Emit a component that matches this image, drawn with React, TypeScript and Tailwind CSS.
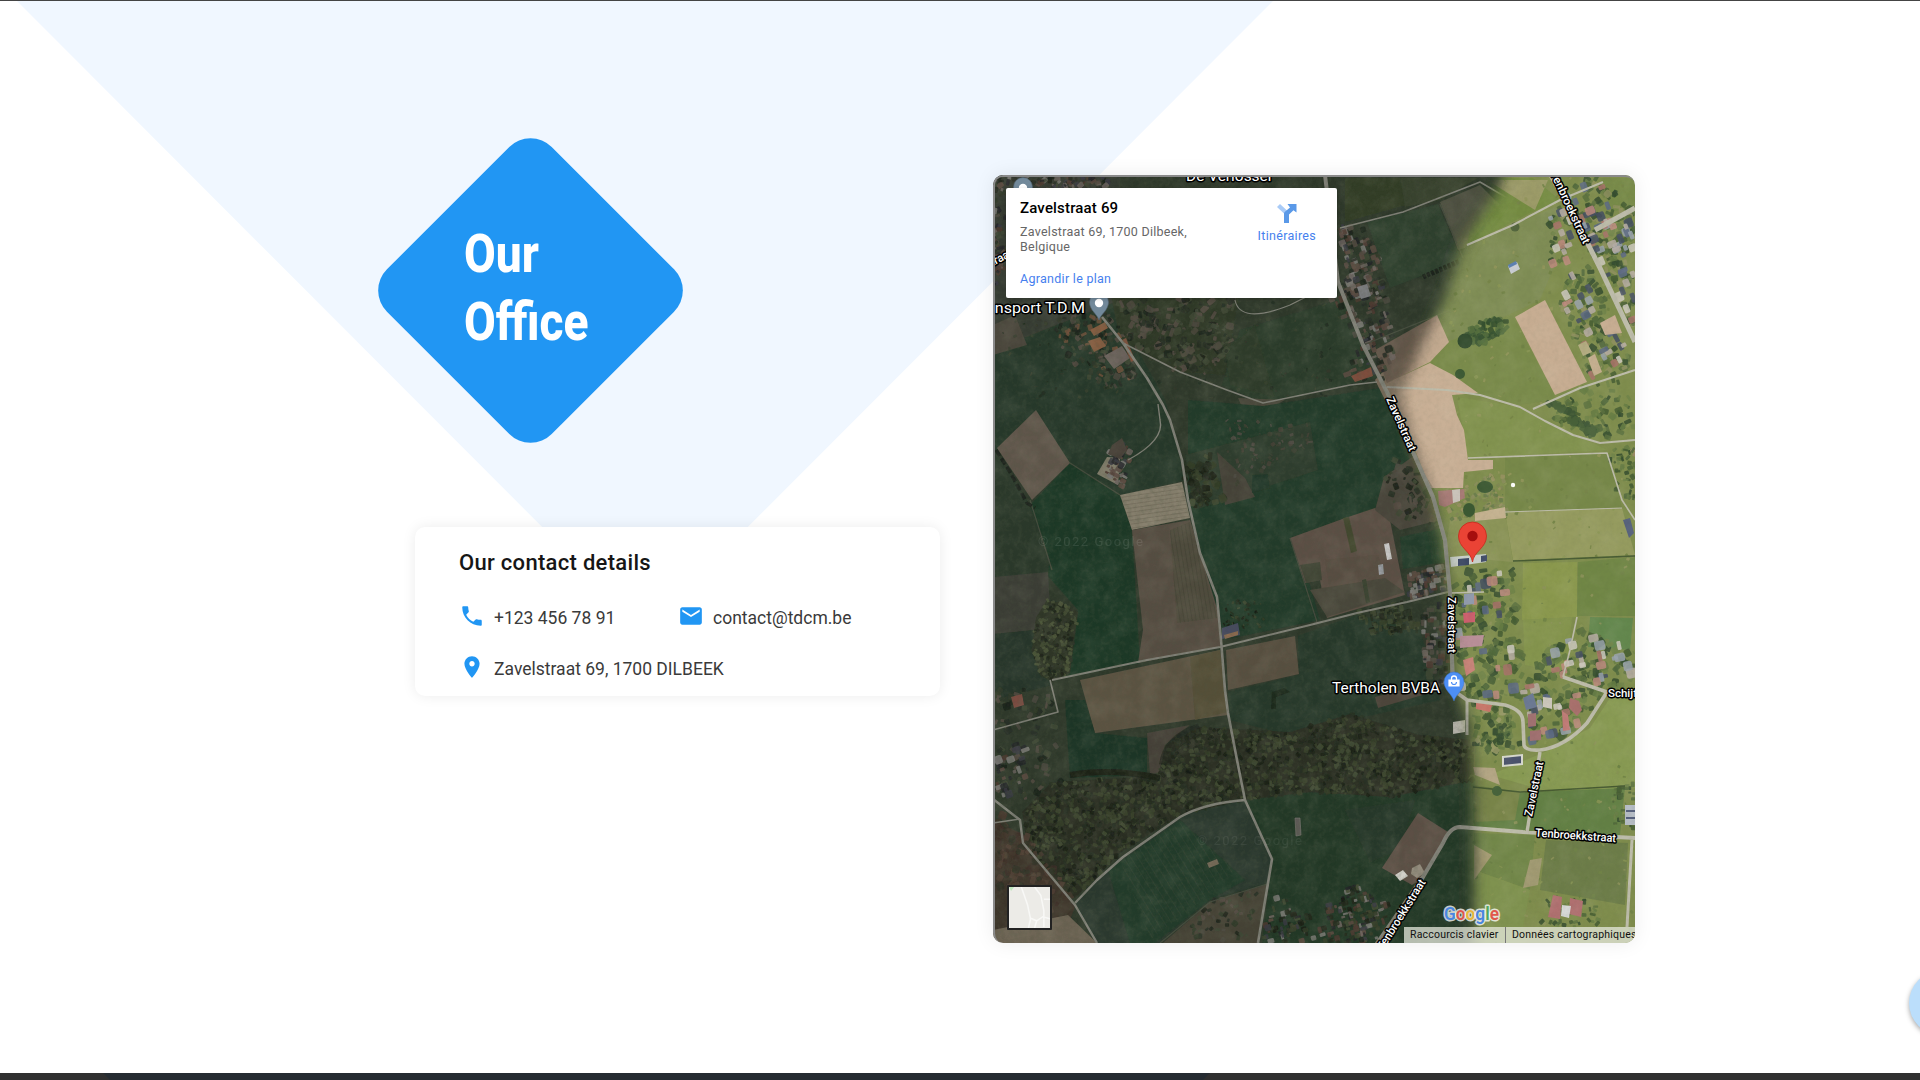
import React from "react";

type Pt = [number, number];
type Road = { d: string; w: number };
type Field = { p: string; c: string };
type Speck = { x: number; y: number; w: number; h: number; a: number; c: string };

function random(seed: number) {
  let s = seed;
  return () => {
    s = (s * 1664525 + 1013904223) % 4294967296;
    return s / 4294967296;
  };
}

function inside(x: number, y: number, poly: Pt[]) {
  let hit = false;
  for (let i = 0, j = poly.length - 1; i < poly.length; j = i++) {
    const [xi, yi] = poly[i];
    const [xj, yj] = poly[j];
    if (yi > y !== yj > y && x < ((xj - xi) * (y - yi)) / (yj - yi) + xi) hit = !hit;
  }
  return hit;
}

function scatter(seed: number, n: number, poly: Pt[], colors: string[], min: number, max: number, angle?: number): Speck[] {
  const r = random(seed);
  const xs = poly.map((p) => p[0]);
  const ys = poly.map((p) => p[1]);
  const x0 = Math.min(...xs);
  const y0 = Math.min(...ys);
  const w = Math.max(...xs) - x0;
  const h = Math.max(...ys) - y0;
  const out: Speck[] = [];
  for (let i = 0; i < n * 4 && out.length < n; i++) {
    const x = x0 + r() * w;
    const y = y0 + r() * h;
    const sw = min + r() * (max - min);
    const sh = min + r() * (max - min);
    const c = colors[Math.floor(r() * colors.length)];
    const a = angle === undefined ? r() * 180 : angle;
    if (inside(x, y, poly)) out.push({ x, y, w: sw, h: sh, a, c });
  }
  return out;
}

const DARK_TREES = ["#191f16", "#20281b", "#3a422d", "#424b33", "#282f22", "#333c28"];
const DARK_MIX = ["#1c231b", "#2f3929", "#4a463d", "#3e4835", "#272d24", "#544a42"];
const DARK_HOUSES = ["#5a4940", "#6b635e", "#222528", "#7a7976", "#4b372f", "#383a42"];
const LIT_TREES = ["#445c33", "#4e6639", "#344c2f", "#5a7040", "#667d44", "#70844a"];
const LIT_HOUSES = ["#a8726a", "#b9aea6", "#5c6884", "#cfcabf", "#454f63", "#bd8a7e", "#9aa3ad"];

const FOREST: Pt[] = [[1052, 782], [1158, 776], [1166, 745], [1200, 727], [1290, 732], [1350, 714], [1420, 735], [1474, 740], [1474, 780], [1390, 797], [1310, 792], [1245, 800], [1180, 815], [1120, 853], [1075, 898], [1028, 850], [1022, 812]];
const GROVE: Pt[] = [[1047, 600], [1062, 603], [1078, 612], [1070, 673], [1052, 682], [1040, 675], [1032, 650], [1036, 618]];
const NORTH_WOOD: Pt[] = [[1115, 298], [1235, 298], [1235, 330], [1218, 372], [1175, 372], [1120, 335]];
const TOP_STRIP: Pt[] = [[993, 175], [1110, 175], [1110, 190], [1006, 190], [1006, 270], [993, 290]];
const NORTH_VILLAGE: Pt[] = [[1548, 220], [1580, 178], [1600, 178], [1633, 210], [1634, 330], [1598, 262], [1588, 250], [1575, 225], [1565, 270], [1548, 262]];
const EAST_VILLAGE: Pt[] = [[1558, 278], [1592, 266], [1625, 345], [1633, 368], [1610, 375], [1592, 378], [1562, 310]];
const CENTRE_VILLAGE: Pt[] = [[1454, 572], [1515, 567], [1525, 700], [1465, 700], [1458, 680]];
const SOUTH_VILLAGE: Pt[] = [[1528, 665], [1580, 630], [1633, 650], [1633, 685], [1605, 690], [1585, 720], [1560, 740], [1530, 742]];

const darkSpecks: Speck[] = [
  ...scatter(11, 1700, FOREST, DARK_TREES, 2, 6),
  ...scatter(12, 210, GROVE, ["#454f36", "#4d573b", "#30372a", "#1f261b"], 2, 5),
  ...scatter(13, 210, NORTH_WOOD, DARK_MIX, 2, 9),
  ...scatter(14, 160, TOP_STRIP, [...DARK_MIX, ...DARK_HOUSES], 2, 7),
  ...scatter(15, 150, [[1052, 318], [1112, 312], [1140, 372], [1110, 392], [1065, 360]], [...DARK_MIX, "#70513b"], 2, 7),
  ...scatter(16, 60, [[1182, 465], [1212, 455], [1224, 500], [1198, 510], [1189, 500]], DARK_TREES, 3, 9),
  ...scatter(17, 90, [[995, 690], [1052, 690], [1060, 730], [1065, 780], [1030, 800], [995, 790]], DARK_MIX, 2, 8),
  ...scatter(37, 26, [[995, 745], [1025, 740], [1030, 790], [995, 800]], DARK_HOUSES, 3, 9, -20),
  ...scatter(18, 120, [[995, 800], [1025, 830], [1072, 895], [1050, 915], [995, 890]], ["#42352c", "#3b2f28", "#2f3226", "#503f34"], 3, 9),
  ...scatter(19, 150, [[1330, 300], [1352, 270], [1392, 300], [1395, 350], [1385, 380], [1345, 375], [1362, 345]], [...DARK_MIX, ...DARK_HOUSES], 2, 8, -20),
  ...scatter(20, 110, [[1338, 225], [1365, 225], [1385, 265], [1385, 300], [1350, 300]], [...DARK_MIX, ...DARK_HOUSES], 2, 8, -20),
  ...scatter(21, 70, [[1395, 460], [1418, 465], [1436, 510], [1440, 525], [1402, 520], [1385, 480]], DARK_MIX, 2, 8),
  ...scatter(22, 80, [[1407, 575], [1446, 565], [1448, 590], [1410, 600]], DARK_HOUSES, 2, 7, -10),
  ...scatter(23, 110, [[1357, 612], [1405, 602], [1420, 630], [1375, 635]], DARK_TREES, 2, 7, -10),
  ...scatter(24, 90, [[1422, 610], [1450, 600], [1454, 690], [1425, 680]], [...DARK_HOUSES, ...DARK_MIX], 2, 8, 0),
  ...scatter(25, 180, [[1262, 935], [1275, 895], [1320, 920], [1345, 880], [1390, 905], [1375, 943], [1262, 943]], [...DARK_TREES, ...DARK_HOUSES], 2, 7, -15),
  ...scatter(26, 50, [[1210, 900], [1260, 890], [1245, 940], [1180, 942]], DARK_MIX, 2, 6),
  ...scatter(27, 50, [[1105, 455], [1128, 435], [1134, 470], [1122, 490], [1108, 478]], DARK_HOUSES, 2, 7, 30),
  ...scatter(28, 50, [[1220, 605], [1262, 595], [1265, 635], [1225, 640]], DARK_TREES, 1, 4),
  ...scatter(29, 160, [[1000, 300], [1350, 300], [1350, 400], [1000, 400]], ["#202c20", "#313a2b", "#38412f"], 1, 4),
  ...scatter(31, 70, [[1225, 420], [1310, 425], [1312, 445], [1228, 490]], ["#474238", "#3c4133", "#504c45"], 1, 5),
];

const litSpecks: Speck[] = [
  ...scatter(49, 200, [[1440, 178], [1635, 178], [1635, 560], [1460, 560]], ["#758447", "#8b9656", "#6e8043", "#92955c"], 1, 4),
  ...scatter(50, 200, [[1470, 560], [1635, 560], [1635, 943], [1470, 943]], ["#708346", "#879453", "#677d42", "#8d935c"], 1, 4),
  ...scatter(41, 170, NORTH_VILLAGE, [...LIT_TREES, "#8f9060"], 3, 8),
  ...scatter(61, 66, NORTH_VILLAGE, LIT_HOUSES, 4, 10, -22),
  ...scatter(42, 120, EAST_VILLAGE, [...LIT_TREES, "#8f9060"], 3, 8),
  ...scatter(62, 26, EAST_VILLAGE, LIT_HOUSES, 4, 10, -28),
  ...scatter(43, 60, [[1458, 347], [1475, 325], [1508, 314], [1506, 330], [1478, 345]], ["#3f5a37", "#35502f", "#56703f"], 3, 8),
  ...scatter(44, 70, [[1590, 380], [1625, 378], [1635, 430], [1605, 440], [1545, 418]], LIT_TREES, 2, 8),
  ...scatter(54, 40, [[1543, 402], [1552, 400], [1600, 432], [1590, 436]], ["#3d5635", "#48613a"], 4, 8),
  ...scatter(45, 170, CENTRE_VILLAGE, LIT_TREES, 3, 9),
  ...scatter(65, 26, CENTRE_VILLAGE, LIT_HOUSES, 4, 11, -6),
  ...scatter(46, 120, [[1440, 490], [1505, 470], [1507, 515], [1450, 520]], ["#8a8d5d", "#999263", "#66794a", "#7b8450"], 1, 5),
  ...scatter(47, 170, SOUTH_VILLAGE, LIT_TREES, 3, 9),
  ...scatter(67, 44, SOUTH_VILLAGE, LIT_HOUSES, 4, 11, -12),
  ...scatter(48, 90, [[1474, 700], [1515, 710], [1520, 745], [1490, 755], [1475, 750]], [...LIT_TREES, "#9a9b6a"], 2, 8),
  ...scatter(51, 40, [[1540, 898], [1598, 895], [1598, 926], [1540, 926]], LIT_TREES, 2, 6),
  ...scatter(52, 40, [[1612, 790], [1635, 780], [1635, 830], [1614, 828]], LIT_TREES, 2, 6, 0),
  ...scatter(53, 50, [[1608, 450], [1635, 445], [1635, 500], [1618, 500]], [...LIT_TREES, "#a08a6a"], 2, 6),
];

const darkFields: Field[] = [
  { p: "993,300 1110,300 1165,400 1185,480 1120,495 993,450", c: "#27392a" },
  { p: "993,175 1120,175 1120,300 993,350", c: "#363a30" },
  { p: "993,325 1015,315 1027,345 993,355", c: "#48453b" },
  { p: "1110,290 1240,290 1225,375 1180,372 1120,340", c: "#2f3727" },
  { p: "1240,330 1345,298 1377,378 1263,403 1222,385", c: "#2a3b2a" },
  { p: "1225,350 1255,325 1275,398 1230,385", c: "#2d3b29" },
  { p: "1238,398 1285,400 1255,416 1245,414", c: "#4a473a" },
  { p: "1345,178 1400,178 1406,205 1345,222", c: "#323d28" },
  { p: "1400,178 1478,178 1440,200 1405,207", c: "#37422d" },
  { p: "1367,222 1438,204 1462,260 1390,288", c: "#2e3f2f" },
  { p: "1440,202 1480,185 1500,205 1465,248 1458,250", c: "#4d503f" },
  { p: "1188,400 1263,406 1380,388 1410,460 1380,510 1290,540 1310,585 1320,620 1223,640 1200,553 1188,500", c: "#223a29" },
  { p: "1185,455 1310,422 1318,470 1195,510", c: "#2e3c2d" },
  { p: "1217,452 1245,478 1255,497 1225,505", c: "#454338" },
  { p: "1252,475 1268,474 1270,488 1252,493", c: "#243929" },
  { p: "1070,463 1120,495 1132,530 1140,663 1055,680 1078,610 1047,575 1030,505", c: "#1f3826" },
  { p: "993,450 1030,505 1050,560 1048,573 993,578", c: "#29382b" },
  { p: "993,577 1048,572 1050,605 1035,630 993,634", c: "#3a3d34" },
  { p: "993,634 1035,630 1052,685 993,700", c: "#273529" },
  { p: "1036,410 1070,463 1032,500 997,448", c: "#60574b" },
  { p: "1107,457 1120,458 1118,485 1097,474", c: "#807b6b" },
  { p: "1120,495 1182,482 1190,518 1132,530", c: "#857e6c" },
  { p: "1132,530 1190,520 1220,618 1220,647 1138,663 1143,630", c: "#574e42" },
  { p: "1170,530 1190,522 1218,618 1177,623", c: "#504b3d" },
  { p: "1080,680 1220,650 1228,715 1095,733", c: "#5c5343" },
  { p: "1190,657 1220,650 1228,712 1195,720", c: "#545039" },
  { p: "1226,650 1295,636 1299,674 1228,690", c: "#594f40" },
  { p: "1298,636 1357,615 1420,630 1440,700 1350,720 1290,735 1230,720 1228,692 1299,675", c: "#27382a" },
  { p: "1065,700 1085,700 1095,733 1147,738 1147,775 1070,778", c: "#1f3626" },
  { p: "1147,733 1190,725 1165,745 1160,772 1150,775", c: "#454137" },
  { p: "1290,538 1345,518 1375,508 1390,520 1405,595 1327,618 1320,580 1305,583", c: "#5b4f44" },
  { p: "1325,560 1378,555 1385,578 1330,590", c: "#594e42" },
  { p: "1310,590 1385,578 1405,592 1327,617", c: "#4a473a" },
  { p: "1300,565 1320,562 1322,580 1306,583", c: "#414436" },
  { p: "1343,518 1349,517 1357,551 1351,553", c: "#42472f" },
  { p: "1362,580 1366,579 1370,602 1366,603", c: "#37402f" },
  { p: "1384,477 1415,455 1440,520 1400,530 1375,510", c: "#49453a" },
  { p: "1400,537 1443,528 1445,562 1403,569", c: "#233b29" },
  { p: "1375,697 1440,680 1440,690 1378,708", c: "#4e453b" },
  { p: "1415,460 1375,380 1437,315 1455,375 1480,400 1470,490 1435,490", c: "#746656" },
  { p: "1437,315 1449,342 1430,362 1387,383 1375,350", c: "#625548" },
  { p: "1245,800 1310,790 1390,797 1475,780 1475,943 1262,943 1272,860", c: "#243727" },
  { p: "1345,810 1415,800 1400,850 1370,862", c: "#28382a" },
  { p: "1420,740 1475,740 1475,778 1430,785", c: "#3f3d31" },
  { p: "1418,813 1448,832 1423,878 1412,885 1382,868", c: "#5c4f45" },
  { p: "1245,800 1272,859 1268,883 1210,900 1160,943 1097,943 1075,904 1097,880 1123,857 1180,817 1213,805", c: "#29392d" },
  { p: "1108,870 1180,820 1245,880 1210,900 1155,943 1130,943", c: "#233a2a" },
  { p: "1268,884 1210,902 1163,943 1258,943", c: "#454236" },
  { p: "993,820 1025,835 1075,907 1070,920 993,930", c: "#3d342c" },
  { p: "993,930 1068,915 1097,943 993,943", c: "#6c6352" },
];

const litFields: Field[] = [
  { p: "1480,178 1533,178 1560,200 1530,213 1467,245", c: "#748c42" },
  { p: "1487,180 1548,180 1535,210", c: "#9c9b68" },
  { p: "1600,178 1635,178 1635,205 1612,212", c: "#788b48" },
  { p: "1467,245 1560,205 1555,265 1540,300 1445,345 1430,310", c: "#7f8d54" },
  { p: "1448,342 1512,315 1555,395 1553,400 1520,405 1480,395 1430,362", c: "#7a8b4b" },
  { p: "1457,397 1520,407 1607,450 1468,458", c: "#82934f" },
  { p: "1505,457 1610,453 1622,508 1505,512", c: "#778849" },
  { p: "1505,512 1622,508 1635,555 1513,560", c: "#959b5f" },
  { p: "1450,520 1505,512 1513,562 1445,556", c: "#8b9459" },
  { p: "1523,563 1577,562 1577,617 1522,620", c: "#8a984d" },
  { p: "1578,562 1635,557 1635,616 1577,616", c: "#708645" },
  { p: "1590,617 1633,618 1630,650 1588,647", c: "#64874e" },
  { p: "1523,620 1572,617 1568,675 1525,665", c: "#84944e" },
  { p: "1545,752 1590,728 1612,695 1635,700 1635,788 1560,795 1490,775", c: "#889a52" },
  { p: "1472,785 1520,792 1625,788 1620,835 1474,828", c: "#648044" },
  { p: "1472,785 1520,792 1515,820 1474,822", c: "#79854a" },
  { p: "1474,833 1535,835 1530,890 1474,870", c: "#728749" },
  { p: "1546,840 1628,843 1625,905 1540,890", c: "#6d7d49" },
  { p: "1474,870 1530,890 1520,943 1474,943", c: "#7f924f" },
];

const sandFields: Field[] = [
  { p: "1474,845 1492,855 1474,880", c: "#a69c73" },
  { p: "1530,860 1542,858 1538,885 1523,888", c: "#a19a72" },
  { p: "1473,767 1495,768 1500,785 1475,775", c: "#b3a583" },
  { p: "1375,350 1437,315 1449,342 1430,362 1387,383", c: "#c3aa90" },
  { p: "1387,383 1430,363 1453,375 1478,393 1452,395 1457,415 1464,430 1468,460 1493,460 1493,469 1464,472 1463,488 1430,488 1410,437", c: "#c8af95" },
  { p: "1545,300 1587,382 1555,395 1515,317", c: "#c7ad92" },
  { p: "1578,345 1586,341 1592,352 1583,356", c: "#b3ab80" },
  { p: "1588,358 1595,354 1602,372 1594,376", c: "#c4ae8e" },
  { p: "1475,513 1505,507 1506,518 1475,521", c: "#c4b18f" },
  { p: "1600,323 1615,315 1622,333 1605,335", c: "#c7ad92" },
];

const roads: Road[] = [
  { d: "M1102 317L1123 343L1147 378L1163 405L1170 420L1182 460L1188 500L1200 553L1217 597L1221 640L1225 690L1228 713L1237 760L1245 800L1272 859L1258 943", w: 2.6 },
  { d: "M1123 343L1180 372L1227 390L1263 403L1350 385L1377 382", w: 1.6 },
  { d: "M1325 175L1338 282L1363 345L1387 392L1403 425L1413 452L1433 497L1445 540L1450 593L1453 690", w: 4 },
  { d: "M1052 680L1147 660L1220 647L1310 625L1357 613L1407 602L1448 592", w: 2 },
  { d: "M1075 903L1097 880L1123 857L1180 817Q1205 803 1245 800", w: 2.4 },
  { d: "M993 799L1020 820L1023 843L1075 905L1097 943", w: 2.4 },
  { d: "M993 730L1058 712L1050 680", w: 1.6 },
  { d: "M1340 228L1403 212L1480 182L1533 213", w: 1.6 },
  { d: "M1128 460Q1165 440 1160 420L1158 404", w: 1.4 },
  { d: "M993 823L1020 819", w: 1.4 },
  { d: "M1235 300Q1240 325 1290 305L1330 285", w: 1.2 },
];

const litRoads: Road[] = [
  { d: "M1551 175L1587 242L1600 268L1635 342", w: 5 },
  { d: "M1467 245L1513 225L1560 200L1603 182", w: 2 },
  { d: "M1595 230L1635 208", w: 5 },
  { d: "M1387 387L1447 390L1480 395L1520 407L1545 421L1573 435L1600 443L1635 440", w: 2 },
  { d: "M1533 409L1580 388L1635 370", w: 2 },
  { d: "M1468 458L1607 453L1622 500L1635 520", w: 1.6 },
  { d: "M1505 512L1622 508", w: 1 },
  { d: "M1376 945L1423 877L1443 843Q1450 827 1460 827L1523 832L1635 838", w: 4 },
  { d: "M1632 840L1627 927", w: 3 },
  { d: "M1527 832L1540 752", w: 3.4 },
  { d: "M1453 690L1467 700L1505 705Q1523 710 1523 722L1524 745Q1525 751 1540 750Q1565 747 1587 723L1607 692L1563 677", w: 3.6 },
  { d: "M1450 593L1484 592", w: 1.6 },
  { d: "M1577 617L1570 650L1563 677", w: 1.6 },
  { d: "M1467 700L1467 735", w: 3 },
];

function Specks({ items }: { items: Speck[] }) {
  return (
    <>
      {items.map((s, i) => (
        <rect key={i} x={s.x - s.w / 2} y={s.y - s.h / 2} width={s.w} height={s.h} rx={Math.min(s.w, s.h) / 4} fill={s.c} transform={`rotate(${s.a} ${s.x} ${s.y})`} opacity={0.85} />
      ))}
    </>
  );
}

function Fields({ items }: { items: Field[] }) {
  return (
    <>
      {items.map((f, i) => (
        <polygon key={i} points={f.p} fill={f.c} />
      ))}
    </>
  );
}

function Roads({ items, color }: { items: Road[]; color: string }) {
  return (
    <>
      {items.map((r, i) => (
        <path key={i} d={r.d} fill="none" stroke={color} strokeWidth={r.w} strokeLinejoin="round" />
      ))}
    </>
  );
}

type LabelProps = { x: number; y: number; size: number; len?: number; rotate?: number; weight?: number; anchor?: "start" | "end"; children: string };

function Label({ x, y, size, len, rotate = 0, weight = 500, anchor = "start", children }: LabelProps) {
  return (
    <text
      x={x}
      y={y}
      fontSize={size}
      fontWeight={weight}
      textLength={len}
      lengthAdjust="spacingAndGlyphs"
      textAnchor={anchor}
      transform={`rotate(${rotate} ${x} ${y})`}
      fill="#fff"
      stroke="#000"
      strokeWidth={3}
      strokeLinejoin="round"
      paintOrder="stroke"
    >
      {children}
    </text>
  );
}

function GreyPin({ x, y }: { x: number; y: number }) {
  return (
    <g transform={`translate(${x} ${y})`}>
      <path d="M0 17C-2 11-9.500 7-9.500-1A9.500 9.500 0 0 1 9.500-1C9.500 7 2 11 0 17Z" fill="#72899a" stroke="#536573" strokeWidth=".6" />
      <circle cx="0" cy="0" r="4.200" fill="#fff" />
    </g>
  );
}

function SatelliteMap() {
  return (
    <svg className="block h-full w-full font-['Roboto',sans-serif]" viewBox="993 175 642 768" preserveAspectRatio="none">
      <defs>
        <filter id="shade" x="-10%" y="-10%" width="120%" height="120%">
          <feGaussianBlur stdDeviation="7" />
        </filter>
        <filter id="soften">
          <feGaussianBlur stdDeviation=".5" />
        </filter>
        <filter id="grain" x="0" y="0" width="100%" height="100%">
          <feTurbulence type="fractalNoise" baseFrequency=".22" numOctaves="3" seed="4" />
          <feColorMatrix values="0 0 0 0 .08  0 0 0 0 .1  0 0 0 0 .06  1.3 0 0 0 -.5" />
        </filter>
        <filter id="glow" x="0" y="0" width="100%" height="100%">
          <feTurbulence type="fractalNoise" baseFrequency=".05" numOctaves="5" seed="9" />
          <feColorMatrix values="0 0 0 0 .8  0 0 0 0 .76  0 0 0 0 .6  1.3 0 0 0 -.5" />
        </filter>
        <mask id="cloud" maskUnits="userSpaceOnUse" x="993" y="175" width="642" height="768">
          <path filter="url(#shade)" fill="#fff" d="M940 120H1525L1495 195L1462 245L1443 300L1422 345L1400 395L1412 440L1430 490L1442 540L1449 600L1453 680L1470 725L1474 800V1000H940Z" />
        </mask>
        <pattern id="furrows" width="6" height="6" patternUnits="userSpaceOnUse" patternTransform="rotate(-32)">
          <rect width="1" height="6" fill="#3a4b3a" />
        </pattern>
        <pattern id="rows" width="60" height="4" patternUnits="userSpaceOnUse" patternTransform="rotate(-8)">
          <rect width="60" height="1" fill="#6e6757" />
        </pattern>
        <pattern id="columns" width="4" height="60" patternUnits="userSpaceOnUse" patternTransform="rotate(-9)">
          <rect width="1" height="60" fill="#3c3d30" />
        </pattern>
      </defs>

      <g filter="url(#soften)">
        <rect x="993" y="175" width="642" height="768" fill="#7f8d4e" />
        <Fields items={litFields} />
        <Specks items={litSpecks} />
        <Fields items={sandFields} />
        <path d="M1513 561L1635 556M1473 787L1520 792L1625 786" stroke="#465a32" strokeWidth="1.500" fill="none" />
        <path d="M1508 266l9-4 3 7-9 5z" fill="#c9cdd4" />
        <path d="M1508 265l8-4 1 3-8 4z" fill="#5d81b4" />
        <path d="M1450 557l36-3v8l-35 5z" fill="#c9cfc9" />
        <path d="M1458 559l11-1v7l-11 1zM1481 556l6-1v6l-6 1z" fill="#3d4a66" />
        <path d="M1438 491l26-2 1 9-20 9-6-2z" fill="#a77a75" />
        <path d="M1452 490l8-1v12l-7 2z" fill="#c9c2ba" />
        <path d="M1503 757l19-2v9l-19 2z" fill="#46506a" stroke="#d8d9cf" strokeWidth="2" />
        <path d="M1460 636l24-1-2 11-22 2z" fill="#b98f98" />
        <path d="M1463 613l12-1v10l-11 1z" fill="#cc5e6d" />
        <path d="M1464 594l10-1v11l-10 1z" fill="#8e98ac" />
        <path d="M1463 660l10-3 2 13-9 6z" fill="#c77e74" />
        <path d="M1523 698l10-5 4 14-11 3z" fill="#6b7893" />
        <path d="M1543 697l9 1v11l-9-2z" fill="#cbc6bb" />
        <path d="M1528 714l8-1v13l-8 1zM1530 731l11-1v10l-11 1z" fill="#a06f70" />
        <path d="M1570 698l9 3 3 9-5 6-8-8z" fill="#a86f6c" />
        <path d="M1562 711l6 4 2 15-7 1z" fill="#c07a76" />
        <path d="M1476 702l16 3-2 7-14-3z" fill="#c77468" />
        <path d="M1553 895l9 2-2 22-12-2zM1570 898l13 3-2 16-12-3z" fill="#b07070" />
        <path d="M1562 905l9 1-2 12-8-2z" fill="#d6d8d6" />
        <path d="M1625 805h10v20h-10z" fill="#b6bdc6" />
        <path d="M1626 811h9M1626 818h9" stroke="#54607c" strokeWidth="2" />
        <path d="M1623 520l7-2 4 15-5 5z" fill="#55607c" />
        <circle cx="1513" cy="485" r="2.200" fill="#fff" />
        <circle cx="1465" cy="341" r="7.500" fill="#334c2f" />
        <circle cx="1460" cy="374" r="5" fill="#3d5a34" />
        <ellipse cx="1485" cy="487" rx="8" ry="6" fill="#3a5833" />
        <ellipse cx="1469" cy="510" rx="6" ry="7" fill="#3a5833" />
        <circle cx="1497" cy="791" r="5" fill="#46633a" />
        <circle cx="1515" cy="227" r="4.500" fill="#53653c" />
        <Roads items={litRoads} color="#bdbcaa" />

        <g mask="url(#cloud)">
          <rect x="993" y="175" width="642" height="768" fill="#2d382b" />
          <Fields items={darkFields} />
          <polygon points="1120,860 1180,822 1235,870 1190,910 1150,940" fill="url(#furrows)" opacity=".35" />
          <polygon points="1120,495 1182,482 1190,518 1132,530" fill="url(#rows)" opacity=".6" />
          <polygon points="1170,530 1190,522 1218,618 1177,623" fill="url(#columns)" opacity=".5" />
          <polygon points={FOREST.map((p) => p.join(",")).join(" ")} fill="#2a2f24" />
          <polygon points={GROVE.map((p) => p.join(",")).join(" ")} fill="#2e3526" />
          <Specks items={darkSpecks} />
          <path d="M1090 330l15-8 3 6-14 8zM1088 341l12-4 6 9-12 6z" fill="#845c40" />
          <path d="M1104 356l18-10 8 12-16 11z" fill="#69605a" />
          <path d="M1122 340l4-2 9 22-4 2z" fill="#7b4f3b" />
          <path d="M1112 445l10-7 5 12-7 9-12-5z" fill="#464039" />
          <path d="M1222 628l16-5 2 12-18 4z" fill="#474c60" />
          <path d="M1224 635l14-4v4l-13 4z" fill="#8a6a50" />
          <path d="M1384 544l5-1 3 16-5 1z" fill="#c5c4c4" />
          <path d="M1378 565l5-1 1 10-5 1z" fill="#989ba0" />
          <path d="M1395 875l8-5 5 6-8 5z" fill="#d0cfc8" />
          <path d="M1412 868l8-4 5 9-8 5-6-4z" fill="#928b7b" />
          <path d="M1207 863l10-4 2 5-10 4z" fill="#746a59" />
          <path d="M1295 818h5l1 17-5 1z" fill="#5b5954" stroke="#7c7a73" strokeWidth=".6" />
          <path d="M1351 376l20-9 2 9-18 6z" fill="#7c4b3a" />
          <path d="M1011 697l11-3 2 11-10 3z" fill="#7a4c40" />
          <path d="M1453 722l12-2v12l-12 2z" fill="#b2afa8" />
          <path d="M1357 287l10-3 4 12-10 3z" fill="#75777a" />
          <path d="M1363 345L1463 305M1440 204L1463 258M1070 463L1120 495M1030 500L1052 570M1317 622L1290 538M1160 943L1210 902L1267 884" stroke="#454b3d" strokeWidth="1.200" fill="none" />
          <path d="M1423 277L1460 261" stroke="#1b231a" strokeWidth="5" strokeDasharray="3 1.500" />
          <path d="M996 450L1010 472L1027 503L1035 508" stroke="#1b231b" strokeWidth="3.500" strokeDasharray="7 3" fill="none" />
          <path d="M1070 775Q1110 768 1160 778" stroke="#1a2119" strokeWidth="6" fill="none" />
          <path d="M1165 765Q1168 740 1200 729" stroke="#1e231b" strokeWidth="12" fill="none" opacity=".6" />
          <path d="M1272 692l12-4 6 4-14 5v12h-5z" fill="#1c291e" />
          <Roads items={roads} color="#7f7f76" />
          <Roads items={litRoads} color="#7f7f76" />
        </g>
        <path d="M1413 452L1433 497L1445 540L1450 593L1453 690" fill="none" stroke="#85867b" strokeWidth="4" />
      </g>
      <g mask="url(#cloud)">
        <rect x="993" y="175" width="642" height="768" filter="url(#grain)" opacity=".32" />
      </g>
      <rect x="993" y="175" width="642" height="768" filter="url(#grain)" opacity=".1" />
      <rect x="993" y="175" width="642" height="768" filter="url(#glow)" opacity=".12" />

      <text x="1038" y="546" fontSize="13" letterSpacing="1.500" fill="#fff" opacity=".09">© 2022 Google</text>
      <text x="1197" y="845" fontSize="13" letterSpacing="1.500" fill="#fff" opacity=".06">© 2022 Google</text>

      <Label x={1186} y={180.5} size={15} len={87} weight={400}>De Verlosser</Label>
      <Label x={1085} y={312.5} size={15.500} len={113} anchor="end" weight={400}>Transport T.D.M</Label>
      <Label x={963} y={282} size={11.500} len={57} rotate={-28}>Zavelstraat</Label>
      <Label x={1386} y={399} size={11.500} len={58} rotate={66}>Zavelstraat</Label>
      <Label x={1448} y={597} size={11.500} len={56} rotate={90}>Zavelstraat</Label>
      <Label x={1532} y={817} size={11.500} len={56} rotate={-78}>Zavelstraat</Label>
      <Label x={1535} y={836.5} size={11.500} len={81} rotate={4}>Tenbroekkstraat</Label>
      <Label x={1383} y={951} size={11.500} len={81} rotate={-58}>Tenbroekkstraat</Label>
      <Label x={1550} y={173} size={11.500} len={79} rotate={65}>Tenbroekstraat</Label>
      <Label x={1608} y={697} size={11.500}>Schijfstraat</Label>
      <Label x={1332} y={693} size={15.500} len={108} weight={400}>Tertholen BVBA</Label>

      <GreyPin x={1023} y={188} />
      <GreyPin x={1099} y={303} />
      <g transform="translate(1454 682)">
        <path d="M0 19C-2 12-10 8-10 0A10 10 0 0 1 10 0C10 8 2 12 0 19Z" fill="#4d8ff5" stroke="#3d73c9" strokeWidth=".5" />
        <path d="M-5-2h10v6h-10z" fill="#fff" stroke="#fff" strokeWidth="1.200" />
        <path d="M-2.500-2v-1.500a2.500 2.500 0 0 1 5 0v1.500" fill="none" stroke="#fff" strokeWidth="1.300" />
        <path d="M-2.500 0a2.500 2.500 0 0 0 5 0" fill="none" stroke="#4d8ff5" strokeWidth="1.200" />
      </g>
      <g transform="translate(1472.500 536)">
        <path d="M0 26C-1.500 15-14 12-14 0A14 14 0 0 1 14 0C14 12 1.500 15 0 26Z" fill="#ea4335" stroke="#c5281c" strokeWidth=".8" />
        <circle r="5.200" fill="#a50e0e" />
      </g>

      <text x="1444" y="920" fontSize="18.500" fontWeight="600" textLength="55" lengthAdjust="spacingAndGlyphs" stroke="#fff" strokeOpacity=".75" strokeWidth="3" strokeLinejoin="round" paintOrder="stroke">
        <tspan fill="#4a86e0">G</tspan>
        <tspan fill="#e0584c">o</tspan>
        <tspan fill="#e8b73a">o</tspan>
        <tspan fill="#4a86e0">g</tspan>
        <tspan fill="#4fa75e">l</tspan>
        <tspan fill="#e0584c">e</tspan>
      </text>
    </svg>
  );
}

function DirectionsIcon() {
  return (
    <svg className="h-5 w-5 shrink-0" viewBox="0 0 20 20">
      <path d="M0 4L3 1l7 6.500V13L7 10.500z" fill="#a9cbf7" />
      <path d="M7 20V10.800q0-1 .7-1.700L13 4.500 10.500 1H19.500V9.500L16.500 7.200 12 11.500V20z" fill="#5a99e8" />
    </svg>
  );
}

function InfoCard() {
  return (
    <div className="absolute left-[13px] top-[13px] flex h-[110px] w-[331px] justify-between rounded-[2px] bg-white pl-[14px] pr-[21px] shadow-[0_1px_4px_-1px_rgba(0,0,0,0.3)]">
      <div className="pt-[11px]">
        <div className="text-[15px] font-medium leading-[18px] tracking-[0.17px] text-black">Zavelstraat 69</div>
        <div className="mt-[7px] text-[12.500px] leading-[15px] tracking-[0.26px] text-[#666]">
          Zavelstraat 69, 1700 Dilbeek,
          <br />
          Belgique
        </div>
        <div className="mt-[17px] text-[12.500px] leading-[15px] tracking-[0.28px] text-[#4580ee]">Agrandir le plan</div>
      </div>
      <div className="flex flex-col items-center pt-[15px] text-[12.500px] tracking-[0.3px] text-[#4580ee]">
        <DirectionsIcon />
        <span className="mt-[5px] leading-[16px]">Itinéraires</span>
      </div>
    </div>
  );
}

function LayerThumb() {
  return (
    <div className="absolute left-[14px] top-[710px] h-[45px] w-[45px] rounded-[1px] border-2 border-[#222] bg-[#ecebe7]">
      <svg className="block h-full w-full" viewBox="0 0 40 40" fill="none" stroke="#f8f8f6" strokeWidth="1.500">
        <path d="M12 0l6 17 3 14-2 9M25 0l6 8 3 15v16M20 30l7 3 6-4 7 2M34 12h6M27 33l-2 7" />
        <path d="M0 0h5L2 4z" fill="#bfe6bd" stroke="none" />
      </svg>
    </div>
  );
}

function MapPanel() {
  return (
    <div className="relative mt-[174px] h-[768px] w-[642px] shrink-0 overflow-hidden rounded-[10px] shadow-[0_0_20px_rgba(0,0,0,0.08)]">
      <SatelliteMap />
      <InfoCard />
      <LayerThumb />
      <div className="absolute bottom-0 left-[411px] flex h-[16px] w-[231px] overflow-hidden whitespace-nowrap bg-[#e6e8dc]/75 text-[10.500px] leading-[15px] tracking-[0.2px] text-[#111]">
        <div className="w-[102px] shrink-0 border-r border-[#777] pl-[6px]">Raccourcis clavier</div>
        <div className="shrink-0 pl-[6px]">Données cartographiques</div>
      </div>
      <div className="pointer-events-none absolute inset-0 rounded-[10px] border-l-2 border-t-2 border-[#8a8a8a]" />
    </div>
  );
}

function Detail({ icon, children }: { icon: string; children: string }) {
  return (
    <div className="flex items-center gap-[9px] whitespace-nowrap">
      <svg className="relative -top-[2px] h-[26px] w-[26px] shrink-0 fill-[#2196f3]" viewBox="0 0 24 24">
        <path d={icon} />
      </svg>
      <span>{children}</span>
    </div>
  );
}

const PHONE = "M6.620 10.790c1.440 2.830 3.760 5.140 6.590 6.590l2.200-2.200c.27-.27.67-.36 1.020-.24 1.120.37 2.330.57 3.570.57.55 0 1 .45 1 1V20c0 .55-.45 1-1 1-9.390 0-17-7.610-17-17 0-.55.45-1 1-1h3.500c.55 0 1 .45 1 1 0 1.250.2 2.450.57 3.570.11.35.03.74-.25 1.020l-2.200 2.200z";
const MAIL = "M20 4H4c-1.100 0-1.990.9-1.990 2L2 18c0 1.100.9 2 2 2h16c1.100 0 2-.9 2-2V6c0-1.100-.9-2-2-2zm0 4l-8 5-8-5V6l8 5 8-5v2z";
const PLACE = "M12 2C8.130 2 5 5.130 5 9c0 5.250 7 13 7 13s7-7.750 7-13c0-3.870-3.130-7-7-7zm0 9.500c-1.380 0-2.500-1.120-2.500-2.500s1.120-2.500 2.500-2.500 2.500 1.120 2.500 2.500-1.120 2.500-2.500 2.500z";

function ContactCard() {
  return (
    <section className="relative ml-[37px] mt-[84px] h-[169px] w-[525px] rounded-[10px] bg-white pl-[44px] pt-[21px] shadow-[0_0_14px_rgba(0,0,0,0.08)]">
      <h2 className="text-[22px] font-medium leading-[30px] tracking-[0.3px] text-[#161616]">Our contact details</h2>
      <div className="mt-[27px] flex flex-col gap-[25px] text-[17.500px] leading-[26px] text-[#3a3a3a]">
        <div className="grid grid-cols-[219px_1fr]">
          <Detail icon={PHONE}>+123 456 78 91</Detail>
          <Detail icon={MAIL}>contact@tdcm.be</Detail>
        </div>
        <Detail icon={PLACE}>Zavelstraat 69, 1700 DILBEEK</Detail>
      </div>
    </section>
  );
}

function Title() {
  return (
    <div className="relative mt-[137px] flex h-[305px] w-[305px] items-center justify-center">
      <div className="absolute left-[36px] top-[36px] h-[233px] w-[233px] rotate-45 rounded-[30px] bg-[#2196f3]" />
      <h1 className="relative -top-[3px] w-[134px] text-[53px] font-extrabold leading-[68px] text-white">
        <span className="inline-block origin-left scale-x-[0.87] whitespace-nowrap">
          Our
          <br />
          Office
        </span>
      </h1>
    </div>
  );
}

export default function App() {
  return (
    <div className="relative flex h-[1080px] w-[1920px] flex-col overflow-hidden bg-white font-['Roboto',sans-serif]">
      <div className="absolute -left-[985px] top-0 h-full w-[3260px] bg-[#f0f7ff] [clip-path:polygon(1001px_0,2259px_0,1630px_630px)]" />
      <div className="relative h-px shrink-0 bg-[#444]" />
      <main className="relative flex flex-1">
        <div className="ml-[378px] w-[615px] shrink-0">
          <Title />
          <ContactCard />
        </div>
        <MapPanel />
      </main>
      <button aria-label="Scroll to top" className="absolute left-[1909px] top-[971px] h-[64px] w-[64px] rounded-full bg-[#bbdefb] shadow-[0_2px_5px_rgba(0,0,0,0.35)]" />
      <footer className="relative h-[7px] shrink-0 bg-[#303030]">
        <div className="ml-[103px] h-full w-[1107px] bg-[#262c32] [clip-path:polygon(0_0,100%_0,1100px_100%,7px_100%)]" />
      </footer>
    </div>
  );
}
